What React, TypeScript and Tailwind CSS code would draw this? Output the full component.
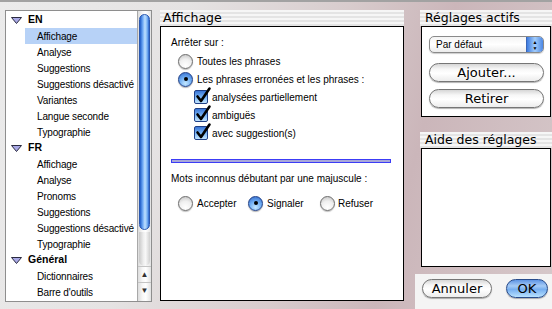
import React from 'react';

const stripe =
  'bg-[repeating-linear-gradient(180deg,#f6f6f6_0px,#f6f6f6_2px,#e4e4e4_2px,#e4e4e4_4px)]';

function Triangle() {
  return (
    <svg width="11" height="7" viewBox="0 0 11 7" className="shrink-0">
      <polygon points="0.5,0.5 10.5,0.5 5.5,6.5" fill="#a9a9e6" stroke="#2a2a40" strokeWidth="1" />
    </svg>
  );
}

function Radio({ checked }: { checked?: boolean }) {
  return checked ? (
    <span className="flex h-[15px] w-[15px] shrink-0 items-center justify-center rounded-full border border-[#1f3f86] bg-[radial-gradient(circle_at_50%_80%,#c4e8ff_0%,#6eacf2_50%,#2c63c6_100%)] shadow-[0_1px_1px_rgba(0,0,0,0.3)]">
      <span className="h-[4px] w-[4px] rounded-full bg-black" />
    </span>
  ) : (
    <span className="h-[15px] w-[15px] shrink-0 rounded-full border border-[#6d6d6d] bg-[radial-gradient(circle_at_50%_80%,#ffffff_0%,#f0f0f0_50%,#bdbdbd_100%)] shadow-[0_1px_1px_rgba(0,0,0,0.25)]" />
  );
}

function Check() {
  return (
    <span className="relative h-[14px] w-[14px] shrink-0 rounded-[2px] border border-[#1f3f86] bg-[linear-gradient(180deg,#3a76d6_0%,#7db8f6_55%,#c2e4ff_100%)]">
      <svg width="16" height="17" viewBox="0 0 16 17" className="absolute -top-[4px] left-[0px] overflow-visible">
        <path d="M2.5 9.5 L6 14 L14.5 1.5" fill="none" stroke="#000" strokeWidth="2.6" strokeLinecap="round" strokeLinejoin="round" />
      </svg>
    </span>
  );
}

function Button({ children, blue, className }: { children: React.ReactNode; blue?: boolean; className?: string }) {
  return (
    <div
      className={
        (blue
          ? 'border-[#284c8c] bg-[linear-gradient(180deg,#5e94e4_0%,#a6cbf6_35%,#76aef0_55%,#b8e2ff_100%)] '
          : 'border-[#767676] bg-[linear-gradient(180deg,#d6d6d6_0%,#f7f7f7_30%,#ffffff_55%,#ececec_100%)] ') +
        "flex items-center justify-center rounded-full border font-['DejaVu_Sans',sans-serif] text-[13px] leading-none text-black shadow-[0_1px_1px_rgba(0,0,0,0.3)] " +
        (className ?? '')
      }
    >
      {children}
    </div>
  );
}

const groups: { name: string; items: string[] }[] = [
  { name: 'EN', items: ['Affichage', 'Analyse', 'Suggestions', 'Suggestions désactivé', 'Variantes', 'Langue seconde', 'Typographie'] },
  { name: 'FR', items: ['Affichage', 'Analyse', 'Pronoms', 'Suggestions', 'Suggestions désactivé', 'Typographie'] },
  { name: 'Général', items: ['Dictionnaires', "Barre d'outils"] },
];

export default function App() {
  return (
    <div className="h-[309px] w-[552px] overflow-hidden border-t-2 border-[#a2a2a2] bg-[linear-gradient(105deg,#ebebeb_0%,#e5e3e3_30%,#d8cccd_55%,#cbb6ba_72%,#d6c8ca_100%)] font-['Liberation_Sans',sans-serif] text-[10px] text-black">
      <div className="flex items-start pl-[5px] pt-[8px]">
        {/* Left: outline list */}
        <div className="flex h-[292px] w-[147px] border border-[#8e8e8e] bg-white">
          <div className="w-[131px] overflow-hidden whitespace-nowrap pt-[1px]">
            {groups.map((g, gi) => (
              <React.Fragment key={g.name}>
                <div className="flex h-[16px] items-center gap-[6px] pl-[5px]">
                  <Triangle />
                  <span className="text-[10.5px] font-bold">{g.name}</span>
                </div>
                {g.items.map((it, i) => (
                  <div
                    key={it + i}
                    className={
                      'ml-[19px] flex h-[16px] w-[112px] items-center pl-[12px] tracking-[-0.15px] ' +
                      (gi === 0 && i === 0 ? 'bg-[#b7d2f7]' : '')
                    }
                  >
                    {it}
                  </div>
                ))}
              </React.Fragment>
            ))}
          </div>
          {/* Scrollbar */}
          <div className="flex w-[14px] flex-col border-l border-[#a8a8a8] bg-[linear-gradient(90deg,#dcdcdc_0%,#f7f7f7_35%,#ffffff_60%,#e2e2e2_100%)]">
            <div className="mx-[1px] mt-[3px] h-[216px] rounded-full border border-[#2a58b0] bg-[linear-gradient(90deg,#1f5cc8_0%,#6ea8f4_30%,#bfe0ff_55%,#7ab2f4_80%,#2a64cc_100%)]" />
            <div className="mx-[1px] mt-[2px] h-[34px] rounded-b-full bg-[linear-gradient(90deg,#c8c8c8_0%,#eeeeee_40%,#f8f8f8_60%,#cfcfcf_100%)]" />
            <div className="flex h-[16px] items-center justify-center border-t border-[#c4c4c4] text-[8px] text-[#333]">▲</div>
            <div className="flex h-[17px] items-center justify-center border-t border-[#c4c4c4] text-[8px] text-[#333]">▼</div>
          </div>
        </div>

        {/* Middle: Affichage */}
        <div className="ml-[8px] w-[244px]">
          <div className={"h-[16px] pl-[3px] font-['DejaVu_Sans',sans-serif] text-[12.5px] leading-[16px] " + stripe}>Affichage</div>
          <div className="h-[275px] border border-black bg-white pl-[10px] pt-[7px]">
            <div className="flex h-[16px] items-center">Arrêter sur :</div>
            <div className="ml-[7px] mt-[2px] flex h-[18px] items-center gap-[4px]">
              <Radio />
              <span>Toutes les phrases</span>
            </div>
            <div className="ml-[7px] flex h-[18px] items-center gap-[4px]">
              <Radio checked />
              <span>Les phrases erronées et les phrases :</span>
            </div>
            {['analysées partiellement', 'ambiguës', 'avec suggestion(s)'].map((t) => (
              <div key={t} className="ml-[23px] flex h-[18px] items-center gap-[4px]">
                <Check />
                <span>{t}</span>
              </div>
            ))}
            <div className="mt-[17px] h-[4px] w-[220px] border border-[#3c3cf6] bg-[#a8a8d8]" />
            <div className="mt-[7px] flex h-[16px] items-center">Mots inconnus débutant par une majuscule :</div>
            <div className="ml-[7px] mt-[8px] flex h-[18px] items-center">
              <div className="flex w-[70px] items-center gap-[4px]">
                <Radio />
                <span>Accepter</span>
              </div>
              <div className="flex w-[72px] items-center gap-[4px]">
                <Radio checked />
                <span>Signaler</span>
              </div>
              <div className="flex items-center gap-[3px]">
                <Radio />
                <span>Refuser</span>
              </div>
            </div>
          </div>
        </div>

        {/* Right column */}
        <div className="ml-[16px] w-[132px]">
          <div className={"h-[16px] pl-[5px] font-['DejaVu_Sans',sans-serif] text-[12.5px] leading-[16px] " + stripe}>Réglages actifs</div>
          <div className="ml-[1px] h-[91px] w-[130px] border border-black bg-white pl-[7px] pt-[9px]">
            <div className="flex h-[17px] w-[115px] overflow-hidden rounded-[5px] border border-[#8a8a8a] bg-[linear-gradient(180deg,#f4f4f4_0%,#ffffff_50%,#ececec_100%)] shadow-[0_1px_1px_rgba(0,0,0,0.2)]">
              <span className="flex flex-1 items-center pl-[6px]">Par défaut</span>
              <span className="flex w-[17px] flex-col items-center justify-center border-l border-[#3a66b8] bg-[linear-gradient(90deg,#3d7be0_0%,#a3cdfa_50%,#4a86e4_100%)] text-[5px] leading-[6px] text-black">
                <span>▲</span>
                <span>▼</span>
              </span>
            </div>
            <Button className="mt-[10px] h-[19px] w-[115px]">Ajouter...</Button>
            <Button className="mt-[7px] h-[19px] w-[115px]">Retirer</Button>
          </div>
          <div className={"mt-[15px] h-[16px] pl-[5px] font-['DejaVu_Sans',sans-serif] text-[12.5px] leading-[16px] " + stripe}>Aide des réglages</div>
          <div className="ml-[1px] h-[119px] w-[130px] border border-black bg-white" />
          <div className="-ml-[5px] mt-[7px] flex h-[35px] w-[137px] items-start bg-[#f4f4f4] pl-[7px] pt-[5px]">
            <Button className="h-[19px] w-[70px]">Annuler</Button>
            <Button blue className="ml-[14px] h-[19px] w-[42px]">OK</Button>
          </div>
        </div>
      </div>
    </div>
  );
}
